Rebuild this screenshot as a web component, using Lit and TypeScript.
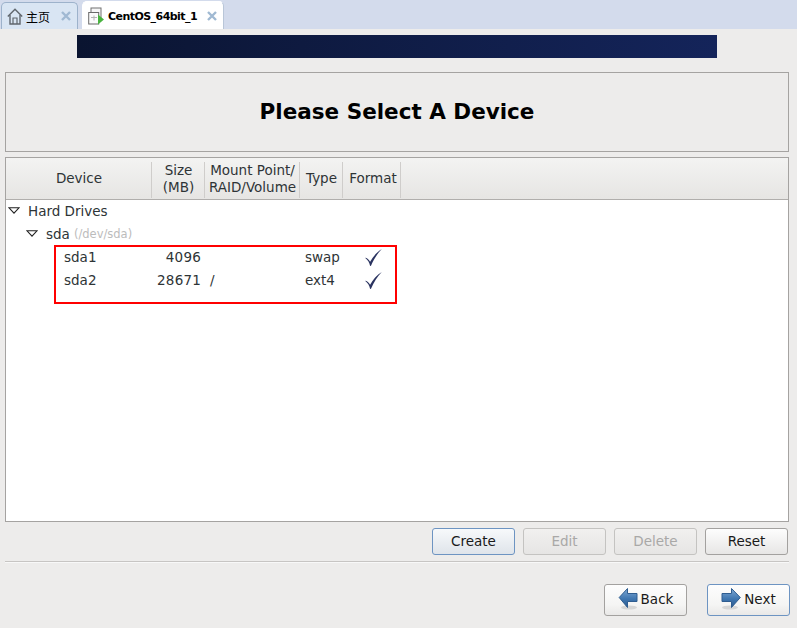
import { LitElement, html, css, svg } from "lit";
import { customElement } from "lit/decorators.js";

const tri = svg`<svg width="12" height="7" viewBox="0 0 12 7"><path d="M1 .8h10L6 6.200z" fill="#fff" stroke="#222" stroke-width="1.100"/></svg>`;
const check = html`<svg class="chk" width="17" height="17" viewBox="0 0 17 17"><path d="M0 8.800C2 8.900 4 10.600 5.100 12.800 8 7.500 11.800 3.200 16.800 0 12.500 4.500 8.800 10 6 16.800L5.100 17C4.500 13.500 2.700 10.800 0 8.800Z" fill="#2a3360"/></svg>`;
const grad = svg`<defs><linearGradient id="ag" x1="0" y1="0" x2="0" y2="1"><stop offset="0" stop-color="#7fa9d4"/><stop offset=".55" stop-color="#3f76b0"/><stop offset="1" stop-color="#2c5a8e"/></linearGradient></defs>`;
const arrowL = html`<svg width="20" height="24" viewBox="0 0 20 24">${grad}<ellipse cx="11" cy="20.500" rx="8" ry="2" fill="#d6d6d6"/><path d="M1.200 10.500 9.500 1.500v5h9.500v8H9.500v6z" fill="url(#ag)" stroke="#2f5d90"/></svg>`;
const arrowR = html`<svg width="20" height="24" viewBox="0 0 20 24">${grad}<ellipse cx="9" cy="20.500" rx="8" ry="2" fill="#d6d6d6"/><path d="M19.300 10.500 10.500 1.500v5H1v8h9.500v6z" fill="url(#ag)" stroke="#2f5d90"/></svg>`;
const cross = html`<svg width="10" height="10" viewBox="0 0 10 10"><path d="M1 1l8 8M9 1l-8 8" stroke="#a0b9d2" stroke-width="2.400"/></svg>`;

const rows = [
  { name: "sda1", size: "4096", mount: "", type: "swap" },
  { name: "sda2", size: "28671", mount: "/", type: "ext4" },
];

@customElement("app-root")
export class AppRoot extends LitElement {
  static styles = css`
    :host { display: block; width: 797px; height: 628px; background: #edeceb; overflow: hidden; position: relative;
      font-family: "DejaVu Sans", sans-serif; font-size: 13.500px; color: #2e3436; }
    * { box-sizing: border-box; }
    svg { display: block; flex: none; }
    .tabs { height: 29px; background: #d3dbec; display: flex; align-items: flex-end; padding-left: 1px; gap: 4px; }
    .tab { height: 27px; border: 1px solid #9db2cb; border-bottom: 0; border-radius: 5px 5px 0 0; display: flex; align-items: center; font-family: "Liberation Sans", "Noto Sans CJK SC", sans-serif; font-size: 12px; color: #000; }
    .tab.a { width: 77px; background: #d9e5f3; padding-left: 5px; }
    .tab.a .lbl { margin-left: 3px; }
    .tab.b { width: 142px; height: 28px; background: #fff; padding-left: 5px; font-weight: bold; font-size: 11px; font-family: "DejaVu Sans", sans-serif; letter-spacing: -.55px; border-color: #b9c6d8; border-top-color: #fff; border-left-color: #fff; }
    .tab.b .lbl { margin-left: 4px; padding-top: 2px; }
    .x { margin-left: auto; margin-right: 6px; display: flex; }
    .banner-wrap { padding: 6px 0 0 77px; height: 43px; }
    .banner { width: 640px; height: 23px; background: linear-gradient(90deg, #0a1430 0%, #0e1a40 35%, #14245a 100%); }
    .title { margin-left: 5px; width: 784px; height: 80px; border: 1px solid #a5a3a1; padding-bottom: 2px; display: flex; align-items: center; justify-content: center; font-size: 21.500px; font-weight: bold; color: #000; }
    .table { margin: 5px 0 0 5px; width: 784px; height: 365px; border: 1px solid #a5a3a1; background: #fff; }
    .thead { height: 42px; display: grid; grid-template-columns: 146px 53px 95px 43px 58px 1fr; background: linear-gradient(180deg, #f3f3f2 0%, #e6e5e3 100%); border-bottom: 1px solid #b0aeac; padding: 4px 0; }
    .th { display: flex; align-items: center; justify-content: center; text-align: center; line-height: 17px; border-right: 1px solid #cfcdcb; padding: 0 0 2px 1px; white-space: nowrap; }
    .th.one { padding-bottom: 4px; }
    .th.fmt { padding-left: 3px; }
    .th:last-child { border-right: 0; }
    .tree { display: flex; flex-direction: column; }
    .node { height: 23px; display: flex; align-items: center; padding-bottom: 2px; }
    .node.l1 { padding-left: 2px; gap: 8px; }
    .node.l2 { padding-left: 20px; gap: 8px; }
    .dim { font-size: 11.500px; color: #bcbcbc; margin-left: -4px; padding-top: 1px; }
    .row { height: 23px; display: grid; grid-template-columns: 60px 78px 103px 59px 1fr; align-items: center; padding-left: 58px; padding-bottom: 2px; }
    .row .size { text-align: right; white-space: nowrap; letter-spacing: .2px; padding-right: 1px; }
    .row .mp { padding-left: 8px; }
    .chk { margin: 1px 0 0 1px; }
    .red { position: absolute; left: 54px; top: 245px; width: 343px; height: 59px; border: 2px solid #ff0000; }
    .actions { margin-top: 6px; display: flex; justify-content: flex-end; gap: 8px; padding-right: 9px; }
    .btn { width: 83px; height: 27px; border: 1px solid #a3a19f; border-radius: 3px; background: linear-gradient(180deg, #fdfdfd 0%, #e7e6e5 100%); display: flex; align-items: center; justify-content: center; color: #1a1a1a; padding-bottom: 1px; }
    .btn.focus { border-color: #6d94c2; background: linear-gradient(180deg, #f7f9fb 0%, #dfe4ea 100%); }
    .btn.dis { color: #a9a8a7; border-color: #c4c3c1; background: linear-gradient(180deg, #f1f0ef 0%, #e6e5e4 100%); }
    .sep { margin: 6px 0 0 5px; height: 2px; border-top: 1px solid #c7c5c3; border-bottom: 1px solid #f8f8f8; width: 784px; }
    .nav { margin-top: 21px; display: flex; justify-content: flex-end; gap: 20px; padding-right: 7px; }
    .nav .btn { height: 32px; gap: 3px; padding-bottom: 2px; background: linear-gradient(180deg, #fdfdfd 0%, #f5f5f4 65%, #e9e8e7 100%); }
  `;

  render() {
    return html`
      <div class="tabs">
        <div class="tab a">
          <svg width="16" height="17" viewBox="0 0 16 17" fill="none" stroke="#60666d" stroke-width="1.400"><path d="M.8 8.500 8 1.200 15.200 8.500"/><path d="M3 7v9h10V7"/><path d="M6 16v-6h4v6" stroke-width="1.200"/></svg>
          <span class="lbl">主页</span>
          <span class="x">${cross}</span>
        </div>
        <div class="tab b">
          <svg width="16" height="18" viewBox="0 0 16 18" fill="none"><rect x="3" y="1" width="10" height="11" fill="#f6f6f6" stroke="#707070"/><rect x=".7" y="5.500" width="10" height="11.500" fill="#fbfbfb" stroke="#6a6a6a"/><path d="M3 10.500h6M6 8.500v5" stroke="#b5b5b5"/><path d="M10 7.500 16 12.500 10 17.500z" fill="#49b33f"/></svg>
          <span class="lbl">CentOS_64bit_1</span>
          <span class="x">${cross}</span>
        </div>
      </div>
      <div class="banner-wrap"><div class="banner"></div></div>
      <div class="title">Please Select A Device</div>
      <div class="table">
        <div class="thead">
          <div class="th one">Device</div>
          <div class="th">Size<br />(MB)</div>
          <div class="th">Mount Point/<br />RAID/Volume</div>
          <div class="th one">Type</div>
          <div class="th one fmt">Format</div>
          <div class="th"></div>
        </div>
        <div class="tree">
          <div class="node l1">${tri}<span>Hard Drives</span></div>
          <div class="node l2">${tri}<span>sda</span><span class="dim">(/dev/sda)</span></div>
          ${rows.map(
            (r) => html`<div class="row">
              <span>${r.name}</span>
              <span class="size">${r.size}</span>
              <span class="mp">${r.mount}</span>
              <span>${r.type}</span>
              <span>${check}</span>
            </div>`
          )}
        </div>
      </div>
      <div class="actions">
        <div class="btn focus">Create</div>
        <div class="btn dis">Edit</div>
        <div class="btn dis">Delete</div>
        <div class="btn">Reset</div>
      </div>
      <div class="sep"></div>
      <div class="nav">
        <div class="btn">${arrowL}<span>Back</span></div>
        <div class="btn focus">${arrowR}<span>Next</span></div>
      </div>
      <div class="red"></div>
    `;
  }
}
